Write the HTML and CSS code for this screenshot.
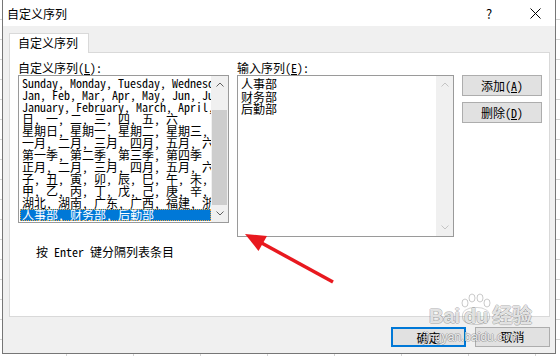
FILE: index.html
```html
<!DOCTYPE html>
<html lang="zh-CN">
<head>
    <meta charset="UTF-8">
    <meta name="viewport" content="width=device-width, initial-scale=1.0">
    <title>自定义序列</title>
    <link rel="stylesheet" href="styles.css">
</head>
<body>
    <div class="dialog">
        <div class="title-bar">
            <span class="title">自定义序列</span>
            <span class="title-btn help">?</span>
            <span class="title-btn close">
                <svg width="11" height="11" viewBox="0 0 11 11"><path d="M0.5 0.5L10.5 10.5M10.5 0.5L0.5 10.5" stroke="#000" stroke-width="1" fill="none"/></svg>
            </span>
        </div>

        <div class="dialog-body">
            <div class="tabs">
                <div class="tab active">自定义序列</div>
            </div>

            <div class="tab-panel">
                <div class="col">
                    <div class="field-label">自定义序列(<u>L</u>):</div>
                    <div class="listbox">
                        <ul class="list-items">
                            <li>Sunday, Monday, Tuesday, Wednesday, Thursday, Friday, Saturday</li>
                            <li>Jan, Feb, Mar, Apr, May, Jun, Jul, Aug, Sep, Oct, Nov, Dec</li>
                            <li>January, February, March, April, May, June, July</li>
                            <li>日, 一, 二, 三, 四, 五, 六</li>
                            <li>星期日, 星期一, 星期二, 星期三, 星期四, 星期五, 星期六</li>
                            <li>一月, 二月, 三月, 四月, 五月, 六月, 七月, 八月</li>
                            <li>第一季, 第二季, 第三季, 第四季</li>
                            <li>正月, 二月, 三月, 四月, 五月, 六月, 七月</li>
                            <li>子, 丑, 寅, 卯, 辰, 巳, 午, 未, 申, 酉, 戌, 亥</li>
                            <li>甲, 乙, 丙, 丁, 戊, 己, 庚, 辛, 壬, 癸</li>
                            <li>湖北, 湖南, 广东, 广西, 福建, 浙江</li>
                            <li class="selected">人事部, 财务部, 后勤部</li>
                        </ul>
                        <div class="scrollbar">
                            <span class="sb-btn">
                                <svg width="8" height="5" viewBox="0 0 8 5"><polyline points="0.5,4.5 4,1 7.5,4.5" fill="none" stroke="#606060"/></svg>
                            </span>
                            <span class="sb-track"><span class="sb-thumb"></span></span>
                            <span class="sb-btn">
                                <svg width="8" height="5" viewBox="0 0 8 5"><polyline points="0.5,0.5 4,4 7.5,0.5" fill="none" stroke="#606060"/></svg>
                            </span>
                        </div>
                    </div>
                    <p class="hint">按 Enter 键分隔列表条目</p>
                </div>

                <div class="col">
                    <div class="field-label">输入序列(<u>E</u>):</div>
                    <div class="entry-box">
                        <div class="entry-text">人事部<br>财务部<br>后勤部</div>
                        <div class="scrollbar disabled">
                            <span class="sb-btn">
                                <svg width="8" height="5" viewBox="0 0 8 5"><polyline points="0.5,4.5 4,1 7.5,4.5" fill="none" stroke="#c4c4c4"/></svg>
                            </span>
                            <span class="sb-track"></span>
                            <span class="sb-btn">
                                <svg width="8" height="5" viewBox="0 0 8 5"><polyline points="0.5,0.5 4,4 7.5,0.5" fill="none" stroke="#c4c4c4"/></svg>
                            </span>
                        </div>
                    </div>
                </div>

                <div class="col btn-col">
                    <button class="btn">添加(<u>A</u>)</button>
                    <button class="btn">删除(<u>D</u>)</button>
                </div>
            </div>

            <div class="footer">
                <button class="btn footer-btn default">确定</button>
                <button class="btn footer-btn">取消</button>
            </div>
        </div>
    </div>

    <!-- red arrow drawn over the screenshot -->
    <svg class="annotation" width="560" height="356" viewBox="0 0 560 356">
        <line x1="333" y1="282" x2="258" y2="241" stroke="#e8191f" stroke-width="3.5"/>
        <polygon points="245,234 258.5,251 267,236" fill="#e8191f"/>
    </svg>

    <div class="watermark">
        <div class="wm-logo">
            <span>Bai</span>
            <span class="paw">
                <svg width="30" height="15" viewBox="0 0 30 15">
                    <ellipse cx="4" cy="10" rx="3" ry="4"/>
                    <ellipse cx="11" cy="5" rx="3" ry="4"/>
                    <ellipse cx="19" cy="5" rx="3" ry="4"/>
                    <ellipse cx="26" cy="10" rx="3" ry="4"/>
                </svg>
                <span class="paw-pad">du</span>
            </span>
            <span>经验</span>
        </div>
        <div class="wm-url">jingyan.baidu.com</div>
    </div>
</body>
</html>
```

FILE: styles.css
```css
body {
    margin: 0;
    width: 560px;
    height: 356px;
    overflow: hidden;
    position: relative;
    font-family: "Noto Sans Mono CJK SC", "Liberation Mono", "Noto Sans CJK SC", monospace;
    font-size: 12px;
    color: #000;
    background-color: #fff;
    background-image:
        repeating-linear-gradient(to bottom, transparent 0, transparent 19px, #d4d4d4 19px, #d4d4d4 20px),
        repeating-linear-gradient(to right, transparent 0, transparent 66px, #d4d4d4 66px, #d4d4d4 67px);
}

.dialog {
    margin-left: 2px;
    width: 554px;
    height: 354px;
    box-sizing: border-box;
    border: 1px solid #767676;
    border-top: none;
    display: flex;
    flex-direction: column;
    background: #f0f0f0;
}

.title-bar {
    height: 26px;
    background: #fff;
    display: flex;
    align-items: center;
    padding-left: 4px;
    flex-shrink: 0;
}

.title {
    font-family: "Noto Sans CJK SC", sans-serif;
    font-size: 12px;
}

.title-btn {
    height: 26px;
    display: flex;
    align-items: center;
    justify-content: center;
}

.help {
    margin-left: auto;
    width: 46px;
    margin-right: 3px;
    font-family: "Noto Sans CJK SC", sans-serif;
    font-size: 13px;
}

.close {
    width: 40px;
}

.dialog-body {
    flex: 1;
    padding: 7px 5px 0 6px;
    display: flex;
    flex-direction: column;
}

.tabs {
    display: flex;
    margin-bottom: -1px;
}

.tab {
    height: 20px;
    box-sizing: border-box;
    border: 1px solid #d9d9d9;
    border-bottom: none;
    background: #fff;
    padding: 0 10px 0 8px;
    line-height: 18px;
    position: relative;
    z-index: 1;
}

.tab-panel {
    height: 265px;
    box-sizing: border-box;
    border: 1px solid #d9d9d9;
    background: #fff;
    padding: 8px 0 0 8px;
    display: grid;
    grid-template-columns: 211px 217px 80px;
    column-gap: 8px;
    align-items: start;
}

.col {
    display: flex;
    flex-direction: column;
}

.field-label {
    height: 14px;
    line-height: 14px;
}

.listbox,
.entry-box {
    box-sizing: border-box;
    border: 1px solid #9a9a9a;
    display: flex;
    background: #fff;
}

.listbox {
    height: 148px;
}

.entry-box {
    height: 162px;
}

.list-items {
    flex: 1;
    margin: 0;
    padding: 1px 0 0 1px;
    list-style: none;
    overflow: hidden;
    line-height: 12px;
}

.list-items li {
    height: 12px;
    padding-left: 2px;
    white-space: nowrap;
}

.list-items li.selected {
    background: #0078d7;
    color: #fff;
    outline: 1px dotted #f3a33a;
    outline-offset: -1px;
}

.scrollbar {
    width: 17px;
    flex-shrink: 0;
    background: #f0f0f0;
    display: flex;
    flex-direction: column;
}

.sb-btn {
    height: 17px;
    display: flex;
    align-items: center;
    justify-content: center;
}

.sb-btn svg {
    display: block;
}

.sb-track {
    flex: 1;
    display: flex;
    flex-direction: column;
    padding: 17px 1px 0 1px;
}

.sb-thumb {
    flex: 1;
    background: #cdcdcd;
}

.hint {
    margin: 22px 0 0 18px;
    line-height: 14px;
}

.entry-text {
    flex: 1;
    padding: 2px 0 0 3px;
    line-height: 12.5px;
    font-family: "Noto Sans CJK SC", sans-serif;
}

.btn-col {
    padding-top: 14px;
    gap: 6px;
}

.btn {
    font-family: inherit;
    font-size: 12px;
    color: #000;
    background: #e1e1e1;
    border: 1px solid #adadad;
    border-radius: 0;
    padding: 0;
    height: 21px;
    width: 80px;
    line-height: 18px;
}

.footer {
    display: flex;
    justify-content: flex-end;
    gap: 9px;
    padding-top: 10px;
}

.footer-btn {
    width: 75px;
    height: 20px;
    font-family: "Noto Sans CJK SC", sans-serif;
}

.footer-btn.default {
    border: 2px solid #0078d7;
}

.annotation {
    position: absolute;
    left: 0;
    top: 0;
    pointer-events: none;
}

/* faint site watermark over the bottom right corner */
.watermark {
    position: absolute;
    left: 429px;
    top: 292px;
    color: rgba(255, 255, 255, 0.8);
    text-shadow: 1px 0 rgba(0, 0, 0, 0.2), -1px 0 rgba(0, 0, 0, 0.2), 0 1px rgba(0, 0, 0, 0.2), 0 -1px rgba(0, 0, 0, 0.2);
    font-family: "Liberation Sans", "Noto Sans CJK SC", sans-serif;
    pointer-events: none;
}

.wm-logo {
    height: 32px;
    display: flex;
    align-items: flex-end;
    font-size: 20px;
    font-weight: bold;
    line-height: 16px;
}

.paw {
    display: flex;
    flex-direction: column;
    align-items: center;
    margin: 0 1px;
}

.paw svg {
    display: block;
    fill: rgba(255, 255, 255, 0.6);
    stroke: rgba(150, 150, 150, 0.5);
    stroke-width: 1;
}

.paw-pad {
    border-radius: 45% 45% 40% 40%;
    box-shadow: 0 0 0 1px rgba(150, 150, 150, 0.4);
    padding: 0 1px;
}

.wm-url {
    font-size: 12px;
    line-height: 14px;
    margin: 6px 0 0 -6px;
}
```
